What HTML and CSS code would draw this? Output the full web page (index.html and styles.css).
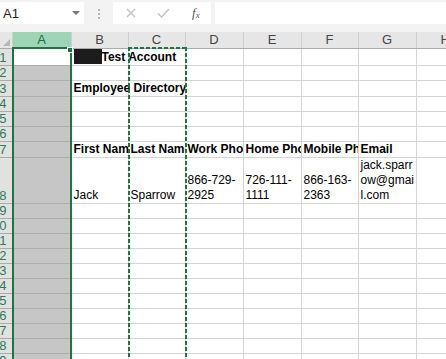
FILE: index.html
```html
<!DOCTYPE html>
<html>
<head>
	<meta charset="utf-8">
	<link rel="stylesheet" href="styles.css">
</head>
<body>
	<!-- name box + formula bar -->
	<div class="toolbar">
		<div class="namebox">
			<span>A1</span>
			<span class="caret"></span>
		</div>
		<div class="grip"><i></i><i></i><i></i></div>
		<div class="fxbox">
			<svg class="btn-cancel" width="10" height="10" viewBox="0 0 10 10"><path d="M1 1L9 9M9 1L1 9" stroke="#c4c4c4" stroke-width="1.4" fill="none"/></svg>
			<svg class="btn-enter" width="13" height="10" viewBox="0 0 13 10"><path d="M1 5.5L4.5 9L12 1" stroke="#c4c4c4" stroke-width="1.5" fill="none"/></svg>
			<span class="fx">f<sub>x</sub></span>
		</div>
		<div class="formula"></div>
	</div>

	<div class="sheet">
		<table class="grid">
			<colgroup>
				<col class="w-rh"><col class="w-59"><col class="w-57"><col class="w-57"><col class="w-58"><col class="w-58"><col class="w-57"><col class="w-58"><col class="w-58">
			</colgroup>
			<thead>
				<tr>
					<th class="corner"><span class="tri"></span></th>
					<th class="col-sel">A</th><th>B</th><th>C</th><th>D</th><th>E</th><th>F</th><th>G</th><th>H</th>
				</tr>
			</thead>
			<tbody>
				<tr class="r15"><th>1</th><td class="a active"></td><td class="spill bold"><span class="redact"></span>Test Account</td><td></td><td></td><td></td><td></td><td></td><td></td></tr>
				<tr class="r15"><th>2</th><td class="a"></td><td></td><td></td><td></td><td></td><td></td><td></td><td></td></tr>
				<tr class="r15"><th>3</th><td class="a"></td><td class="spill bold">Employee Directory</td><td></td><td></td><td></td><td></td><td></td><td></td></tr>
				<tr class="r16"><th>4</th><td class="a"></td><td></td><td></td><td></td><td></td><td></td><td></td><td></td></tr>
				<tr class="r15"><th>5</th><td class="a"></td><td></td><td></td><td></td><td></td><td></td><td></td><td></td></tr>
				<tr class="r15"><th>6</th><td class="a"></td><td></td><td></td><td></td><td></td><td></td><td></td><td></td></tr>
				<tr class="r16"><th>7</th><td class="a"></td><td class="bold">First Name</td><td class="bold">Last Name</td><td class="bold">Work Phone</td><td class="bold">Home Phone</td><td class="bold">Mobile Phone</td><td class="bold">Email</td><td></td></tr>
				<tr class="r46"><th>8</th><td class="a"></td><td>Jack</td><td>Sparrow</td><td class="wrap">866-729-2925</td><td class="wrap">726-111-1111</td><td class="wrap">866-163-2363</td><td class="wrap breakall">jack.sparrow@gmail.com</td><td></td></tr>
				<tr class="r15"><th>9</th><td class="a"></td><td></td><td></td><td></td><td></td><td></td><td></td><td></td></tr>
				<tr class="r16"><th>10</th><td class="a"></td><td></td><td></td><td></td><td></td><td></td><td></td><td></td></tr>
				<tr class="r15"><th>11</th><td class="a"></td><td></td><td></td><td></td><td></td><td></td><td></td><td></td></tr>
				<tr class="r15"><th>12</th><td class="a"></td><td></td><td></td><td></td><td></td><td></td><td></td><td></td></tr>
				<tr class="r16"><th>13</th><td class="a"></td><td></td><td></td><td></td><td></td><td></td><td></td><td></td></tr>
				<tr class="r15"><th>14</th><td class="a"></td><td></td><td></td><td></td><td></td><td></td><td></td><td></td></tr>
				<tr class="r15"><th>15</th><td class="a"></td><td></td><td></td><td></td><td></td><td></td><td></td><td></td></tr>
				<tr class="r16"><th>16</th><td class="a"></td><td></td><td></td><td></td><td></td><td></td><td></td><td></td></tr>
				<tr class="r15"><th>17</th><td class="a"></td><td></td><td></td><td></td><td></td><td></td><td></td><td></td></tr>
				<tr class="r15"><th>18</th><td class="a"></td><td></td><td></td><td></td><td></td><td></td><td></td><td></td></tr>
				<tr class="r15"><th>19</th><td class="a"></td><td></td><td></td><td></td><td></td><td></td><td></td><td></td></tr>
			</tbody>
		</table>

		<!-- selection on column A and copy marquee on column C -->
		<div class="sel-box"><span class="handle"></span></div>
		<div class="copy-box"></div>
	</div>
</body>
</html>
```

FILE: styles.css
```css
html, body {
	margin: 0;
	padding: 0;
	width: 100%;
	height: 100%;
	overflow: hidden;
}
body {
	background: #fff;
	font-family: "Liberation Sans", Arial, sans-serif;
	color: #000;
}

/* ---- formula bar ---- */
.toolbar {
	display: flex;
	align-items: flex-start;
	height: 32px;
	padding-top: 2px;
	box-sizing: border-box;
	background: #f3f3f3;
}
.namebox {
	display: flex;
	align-items: center;
	justify-content: space-between;
	width: 84px;
	height: 22px;
	padding: 0 4px 0 3px;
	box-sizing: border-box;
	background: #fff;
	font-size: 13px;
	color: #222;
}
.caret {
	width: 0;
	height: 0;
	border-left: 4px solid transparent;
	border-right: 4px solid transparent;
	border-top: 4px solid #777;
}
.grip {
	display: flex;
	flex-direction: column;
	align-items: center;
	gap: 2px;
	width: 29px;
	padding-top: 7px;
}
.grip i {
	width: 2px;
	height: 2px;
	background: #b4b4b4;
}
.fxbox {
	display: flex;
	align-items: center;
	width: 98px;
	height: 22px;
	background: #fff;
	box-sizing: border-box;
}
.btn-cancel {
	margin-left: 13px;
}
.btn-enter {
	margin-left: 21px;
}
.fx {
	margin-left: 22px;
	font-family: "Liberation Serif", serif;
	font-style: italic;
	font-size: 13px;
	color: #555;
}
.fx sub {
	font-size: 9px;
	vertical-align: -1px;
}
.formula {
	flex: 1;
	height: 22px;
	margin-left: 4px;
	background: #fff;
}

/* ---- sheet grid ---- */
.sheet {
	position: relative;
}
.grid {
	border-collapse: collapse;
	table-layout: fixed;
	width: 474px;
	font-size: 12px;
	line-height: 15px;
}
.w-rh { width: 12px; }
.w-57 { width: 57px; }
.w-58 { width: 58px; }
.w-59 { width: 59px; }

.grid thead th {
	height: 15px;
	padding: 0;
	background: #e6e6e6;
	border-left: 1px solid #cfcfcf;
	border-bottom: 1px solid #ababab;
	font-weight: normal;
	font-size: 13px;
	line-height: 14px;
	color: #444;
	text-align: center;
}
.grid thead th.corner {
	position: relative;
	border-left: none;
}
.tri {
	position: absolute;
	right: 2px;
	bottom: 2px;
	width: 0;
	height: 0;
	border-left: 7px solid transparent;
	border-bottom: 7px solid #b8b8b8;
}
.grid thead th.col-sel {
	background: #9fd5b7;
	color: #1e6b41;
	border-bottom: 2px solid #217346;
}

.grid tbody th {
	padding: 0 5px 0 0;
	background: #e1e1e1;
	border-bottom: 1px solid #ababab;
	font-weight: normal;
	font-size: 13px;
	line-height: 14px;
	color: #2d7a5c;
	text-align: right;
	direction: rtl;
	white-space: nowrap;
	overflow: hidden;
	vertical-align: bottom;
}
.grid td {
	padding: 0 2px;
	border: 1px solid #d4d4d4;
	vertical-align: bottom;
	white-space: nowrap;
	overflow: hidden;
}
.grid td.a {
	background: #c6c6c6;
	border-color: #adadad;
}
.grid td.a.active {
	background: #fff;
}
.r15 { height: 14px; }
.r16 { height: 15px; }
.r46 { height: 45px; }

.bold { font-weight: bold; }
.grid td.spill { overflow: visible; }
.grid td.wrap { white-space: normal; }
.grid td.breakall {
	word-break: break-all;
	padding-right: 0;
}
.redact {
	display: inline-block;
	width: 28px;
	height: 15px;
	vertical-align: -3px;
	background: #1c1c1c;
}

/* ---- overlays ---- */
.sel-box {
	position: absolute;
	left: 12px;
	top: 15px;
	width: 60px;
	bottom: -20px;
	border-left: 2px solid #217346;
	border-right: 2px solid #217346;
	box-sizing: border-box;
}
.handle {
	position: absolute;
	right: -3px;
	top: 0;
	width: 4px;
	height: 4px;
	background: #217346;
	border: 1px solid #fff;
}
.copy-box {
	position: absolute;
	left: 128px;
	top: 15px;
	width: 59px;
	bottom: -20px;
	background:
		repeating-linear-gradient(to right, #217346 0 4px, transparent 4px 6px) top left / 100% 2px no-repeat,
		repeating-linear-gradient(to bottom, #217346 0 4px, transparent 4px 6px) top left / 2px 100% no-repeat,
		repeating-linear-gradient(to bottom, #217346 0 4px, transparent 4px 6px) top right / 2px 100% no-repeat;
}
```
